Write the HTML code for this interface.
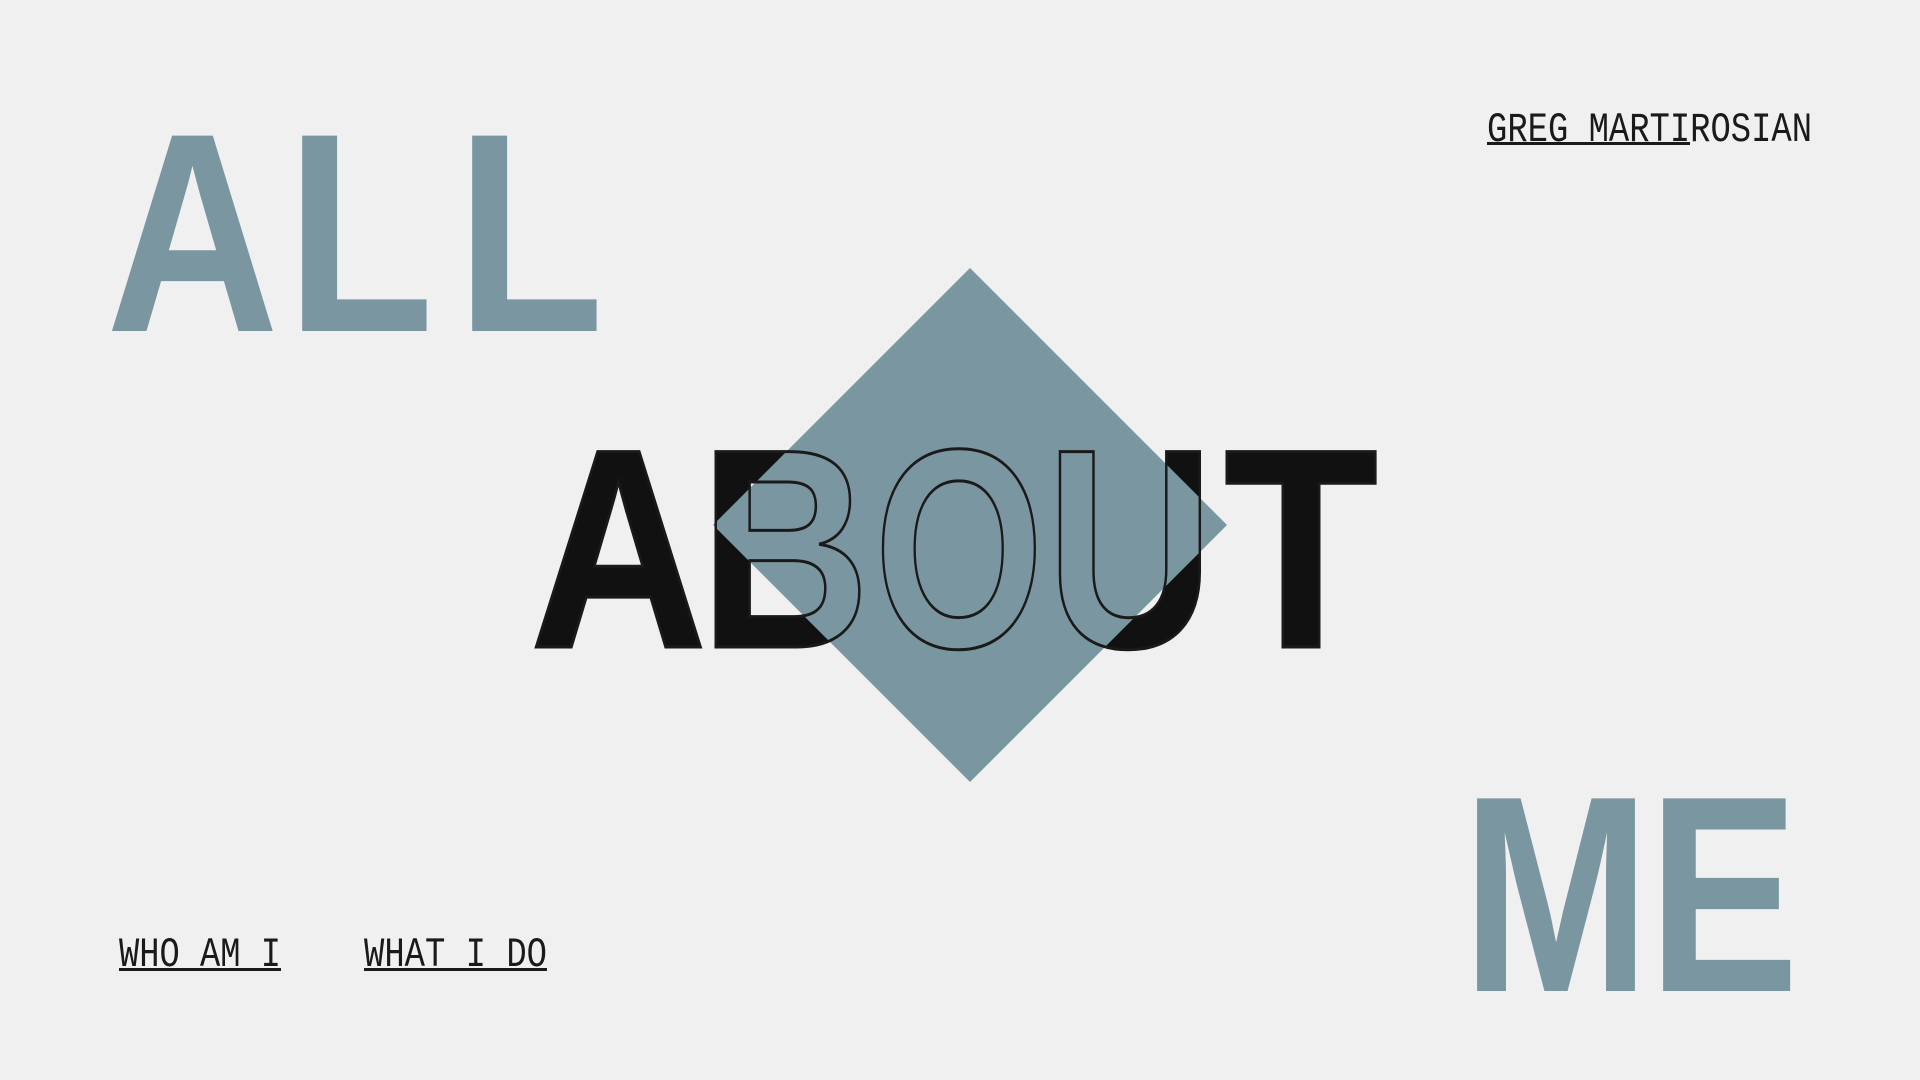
<!DOCTYPE html>
<html><head><meta charset="utf-8"><style>
html,body{margin:0;padding:0;background:#f0f0f0;width:1920px;height:1080px;overflow:hidden}
svg{display:block}
</style></head><body>
<svg width="1920" height="1080" viewBox="0 0 1920 1080" xmlns="http://www.w3.org/2000/svg">
<rect width="1920" height="1080" fill="#f0f0f0"/>
<g font-family="Liberation Sans, Arial, sans-serif" font-weight="bold" font-size="284" fill="#7a96a0">
<text x="106" y="331" textLength="173" lengthAdjust="spacingAndGlyphs">A</text>
<text x="286" y="331" textLength="148" lengthAdjust="spacingAndGlyphs">L</text>
<text x="456" y="331" textLength="148" lengthAdjust="spacingAndGlyphs">L</text>
</g>
<g font-family="Liberation Sans, Arial, sans-serif" font-weight="bold" font-size="280" fill="#7a96a0">
<text x="1462" y="991" textLength="188" lengthAdjust="spacingAndGlyphs">M</text>
<text x="1648" y="991" textLength="151" lengthAdjust="spacingAndGlyphs">E</text>
</g>
<g font-family="Liberation Sans, Arial, sans-serif" font-weight="bold" font-size="284" fill="#111">
<text x="530" y="647" textLength="177" lengthAdjust="spacingAndGlyphs">A</text>
<text x="700" y="647" textLength="170" lengthAdjust="spacingAndGlyphs">B</text>
<text x="874" y="647" textLength="170" lengthAdjust="spacingAndGlyphs">O</text>
<text x="1046" y="647" textLength="168" lengthAdjust="spacingAndGlyphs">U</text>
<text x="1224" y="647" textLength="154" lengthAdjust="spacingAndGlyphs">T</text>
</g>
<polygon points="970,268 1227,525 970,782 713,525" fill="#7a96a0"/>
<g font-family="Liberation Sans, Arial, sans-serif" font-weight="bold" font-size="284" fill="none" stroke="#1a1a1a" stroke-width="3">
<text x="530" y="647" textLength="177" lengthAdjust="spacingAndGlyphs">A</text>
<text x="700" y="647" textLength="170" lengthAdjust="spacingAndGlyphs">B</text>
<text x="874" y="647" textLength="170" lengthAdjust="spacingAndGlyphs">O</text>
<text x="1046" y="647" textLength="168" lengthAdjust="spacingAndGlyphs">U</text>
<text x="1224" y="647" textLength="154" lengthAdjust="spacingAndGlyphs">T</text>
</g>
<g font-family="Liberation Mono, monospace" font-size="42" fill="#1a1a1a">
<text x="1487" y="141" textLength="325" lengthAdjust="spacingAndGlyphs">GREG MARTIROSIAN</text>
<text x="119" y="966" textLength="162" lengthAdjust="spacingAndGlyphs">WHO AM I</text>
<text x="364" y="966" textLength="183" lengthAdjust="spacingAndGlyphs">WHAT I DO</text>
</g>
<rect x="1487" y="142" width="203" height="3" fill="#1a1a1a"/>
<rect x="119" y="968" width="162" height="3" fill="#1a1a1a"/>
<rect x="364" y="968" width="183" height="3" fill="#1a1a1a"/>
</svg>
</body></html>
